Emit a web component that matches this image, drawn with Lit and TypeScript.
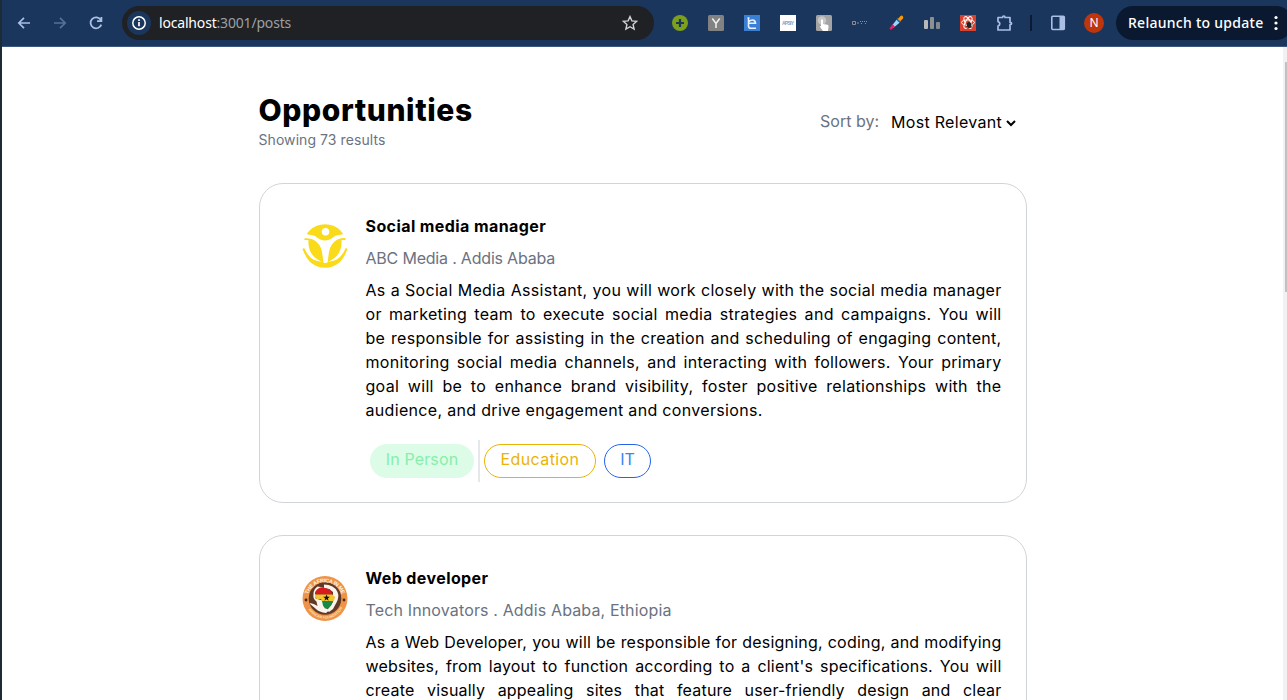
import { LitElement, html, css, svg } from "lit";
import { customElement, property } from "lit/decorators.js";

interface Post {
  title: string;
  meta: string;
  metaClass: string;
  logo: "figure" | "africa";
  lines: string[];
  tight?: boolean;
  last?: string;
}

const posts: Post[] = [
  {
    title: "Social media manager",
    meta: "ABC Media . Addis Ababa",
    metaClass: "narrow",
    logo: "figure",
    lines: [
      "As a Social Media Assistant, you will work closely with the social media manager",
      "or marketing team to execute social media strategies and campaigns. You will",
      "be responsible for assisting in the creation and scheduling of engaging content,",
      "monitoring social media channels, and interacting with followers. Your primary",
      "goal will be to enhance brand visibility, foster positive relationships with the",
    ],
    last: "audience, and drive engagement and conversions.",
  },
  {
    title: "Web developer",
    meta: "Tech Innovators . Addis Ababa, Ethiopia",
    metaClass: "wide",
    logo: "africa",
    tight: true,
    lines: [
      "As a Web Developer, you will be responsible for designing, coding, and modifying",
      "websites, from layout to function according to a client's specifications. You will",
      "create visually appealing sites that feature user-friendly design and clear",
    ],
  },
];

@customElement("browser-bar")
class BrowserBar extends LitElement {
  static styles = css`
    :host { display: flex; align-items: center; box-sizing: border-box; height: 47px; background: #1a365d; border-bottom: 1px solid #3b557c; font-family: "Noto Sans", "Open Sans", sans-serif; font-size: 14px; overflow: hidden; }
    svg { display: block; flex: none; }
    .nav { display: flex; gap: 20px; padding-left: 14px; flex: none; }
    .url { display: flex; align-items: center; flex: none; box-sizing: border-box; width: 532px; height: 34px; margin-left: 18px; padding: 0 16px 2px 5px; border-radius: 17px; background: #202124; color: #9aa0a6; }
    .info { width: 24px; height: 24px; border-radius: 50%; background: #1a365d; margin: 2px 8px 0 0; }
    .star { margin-top: 2px; }
    .host { color: #fff; }
    .addr { flex: 1; white-space: nowrap; letter-spacing: -0.18px; }
    .ext { display: flex; align-items: center; gap: 20px; margin-left: 18px; flex: none; }
    .sep { width: 2px; height: 16px; background: #0b1b36; margin: 0 18px 0 16px; flex: none; }
    .avatar { width: 20px; height: 20px; border-radius: 50%; background: #bf360c; color: #fff; font-size: 12px; line-height: 20px; text-align: center; margin: 0 12px 0 18px; flex: none; }
    .update { display: flex; align-items: center; flex: none; box-sizing: border-box; width: 177px; height: 34px; border-radius: 17px; padding-left: 12px; background: #0a1930; color: #fff; font-weight: 500; white-space: nowrap; }
    .update span { width: 140px; letter-spacing: 0.27px; padding-bottom: 2px; }
    .tiny { font: 700 5px "Liberation Sans", sans-serif; }
  `;
  render() {
    return html`
      <div class="nav">
        <svg width="16" height="16" viewBox="0 0 16 16" fill="none" stroke="#a9bfe3" stroke-width="1.7"><path d="M14 8H3M8 2.8 2.8 8 8 13.2"/></svg>
        <svg width="16" height="16" viewBox="0 0 16 16" fill="none" stroke="#56709a" stroke-width="1.7"><path d="M2 8h11M8 2.8 13.2 8 8 13.2"/></svg>
        <svg width="16" height="16" viewBox="0 0 16 16" fill="none" stroke="#a9bfe3" stroke-width="1.8"><path d="M12.8 5A5.5 5.5 0 1 0 13.3 9.6M13.4 2v4.2H9"/></svg>
      </div>
      <div class="url">
        <svg class="info" viewBox="0 0 24 24"><circle cx="12" cy="12" r="6.2" fill="none" stroke="#fff" stroke-width="1.5"/><path d="M12 11v4.3M12 8.3v1.6" stroke="#fff" stroke-width="1.7"/></svg>
        <div class="addr"><span class="host">localhost</span>:3001/posts</div>
        <svg class="star" width="16" height="16" viewBox="0 0 16 16" fill="none" stroke="#d0d2d6" stroke-width="1.4"><path d="m8 1.6 1.9 4.3 4.7.5-3.5 3.1 1 4.6L8 11.7l-4.1 2.4 1-4.6L1.4 6.4l4.7-.5z"/></svg>
      </div>
      <div class="ext">
        <svg width="16" height="16"><circle cx="8" cy="8" r="8" fill="#7c9f1c"/><path d="M8 4v8M4 8h8" stroke="#1a365d" stroke-width="2.2"/></svg>
        <svg width="16" height="16"><rect width="16" height="16" rx="1.5" fill="#828282"/><path d="m4.3 3.500 3.700 5 3.700-5M8 8v5" fill="none" stroke="#f2f2f2" stroke-width="1.500"/></svg>
        <svg width="16" height="16"><rect width="16" height="16" fill="#3b7fd4"/><path d="M4.500 2.500v8.500q0 2.300 2.300 2.300H12M5 8.300h6.500Q11.300 5 8.500 5 6.300 5 5.200 6.500M3.500 3h2" fill="none" stroke="#e8f2ff" stroke-width="1.600"/></svg>
        <svg width="16" height="16"><rect width="16" height="16" fill="#fff"/><text class="tiny" x="2" y="9.7" fill="#7ca3c4" textLength="12">APSIY</text></svg>
        <svg width="16" height="16"><rect width="16" height="16" rx="1.5" fill="#a4a4a4"/><circle cx="6" cy="5.500" r="4.200" fill="#c6c6c6"/><path d="M5 5q1-1.300 2 0v4l4.500.8q1.500.4 1 2L12 16H7l-3.300-4.500 1.300-.6z" fill="#fff"/></svg>
        <svg width="16" height="16" fill="none" stroke="#8c8f91"><path d="M.5 6.500h3v3h-3zM5 8h2"/><path d="M8 6.500h3M12 6.500h4M9 8.500h2M13 8.500h2" stroke-dasharray="1 1"/></svg>
        <svg width="16" height="16"><path d="M9 3.500 12.500 7" stroke="#2765a8" stroke-width="2"/><path d="m8.500 4.700 3 3-6 5-2-1.500z" fill="#9bd6f6"/><path d="m9.800 4 2.500-2.800q1.500-1.200 2.500 0t0 2.600L12.200 6.300z" fill="#ff9800"/><path d="m4.700 9.300 2.200 2.200-3.400 3H1.800v-1.700z" fill="#e91e63"/></svg>
        <svg width="16" height="16"><rect y="5" width="4" height="9" rx="1" fill="#b7b8ba"/><rect x="6" y="2" width="4" height="12" rx="1" fill="#8c9093"/><rect x="12" y="7" width="4" height="7" rx="1" fill="#83888c"/></svg>
        <svg width="16" height="16"><rect width="16" height="16" fill="#d9412f"/><g fill="none" stroke="#fff"><ellipse cx="8" cy="7.500" rx="6.500" ry="2.600"/><ellipse cx="8" cy="7.500" rx="6.500" ry="2.600" transform="rotate(60 8 7.500)"/><ellipse cx="8" cy="7.500" rx="6.500" ry="2.600" transform="rotate(120 8 7.500)"/></g><ellipse cx="9" cy="10" rx="2.200" ry="3" fill="#222"/><path d="M5.500 9h7M6 12h6.500" stroke="#222" stroke-width=".8"/></svg>
        <svg width="18" height="18" viewBox="0 0 18 18"><path d="M2 3.500h4.600q0-1.500 1.200-1.500T9 3.500h5v4.800q1.600 0 1.600 1.200t-1.600 1.200V16H2v-4q1.800-.5 1.800-2.200T2 7.600z" fill="none" stroke="#a9bfe3" stroke-width="1.700" stroke-linejoin="round"/></svg>
      </div>
      <div class="sep"></div>
      <svg width="16" height="16"><rect x="1.800" y="1.300" width="12.500" height="13.200" rx="1" fill="none" stroke="#a9bfe3" stroke-width="1.600"/><path d="M9.500 1.500h5v13h-5z" fill="#a9bfe3"/></svg>
      <div class="avatar">N</div>
      <div class="update"><span>Relaunch to update</span><svg width="16" height="16" fill="#fff"><circle cx="8" cy="2.500" r="1.600"/><circle cx="8" cy="8" r="1.600"/><circle cx="8" cy="13.500" r="1.600"/></svg></div>
    `;
  }
}

const figure = svg`<circle cx="23" cy="23" r="21.800" fill="#fadb19"/>
  <path d="M0 10.500q9 1 13 2.500 5.500 4.500 10 4.500t10-4.500q4-1.500 13-2.500v4.300q-8 .2-11 2-6.500 4-8 12L25.500 40h-4L20 28.800q-1.500-8-8.500-12Q8 15 0 15z" fill="#fff"/>
  <circle cx="23.500" cy="8.800" r="3.800" fill="#fff"/>
  <path d="M0 17h6.500Q5.500 33 20 38.700 6 38 0 25zM46 17h-6.500Q40.500 33 26 38.700 40 38 46 25z" fill="#fff"/>
  <path d="M9 18Q6.500 19 7.500 24M37 18q2.500 1 1.500 6" fill="none" stroke="#fadb19"/>
  <path d="M1.300 25.500q6 14.500 20.500 15.300M44.700 25.500q-6 14.500-20.500 15.300" fill="none" stroke="#fadb19" stroke-width="2"/>`;

const africa = svg`<defs><path id="top" d="M5.300 25a17.700 17.700 0 1 1 35.400 0"/><path id="bot" d="M3.500 26a19.600 19.600 0 0 0 39 0"/></defs>
  <circle cx="23" cy="23.500" r="22.500" fill="#ee9448"/><circle cx="23" cy="23.500" r="16.300" fill="#613a27"/>
  <text font-family="Liberation Sans" font-weight="700" font-size="5.500" fill="#fff3df"><textPath href="#top" startOffset="10%" textLength="44">THE AFRICA IN ME</textPath></text>
  <text font-family="Liberation Sans" font-weight="700" font-size="3.500" fill="#ffe2b8"><textPath href="#bot" startOffset="16%" textLength="41">AFRICAN FOUNDATION</textPath></text>
  <circle cx="4" cy="25" r="1.400" fill="#4a2715"/><circle cx="42" cy="25" r="1.400" fill="#4a2715"/>
  <path d="M22 9.500q10 0 13.500 7.500 2 5-1 10.500L31 34l-4 3-2-2 6-8V17l-4-3-5-1z" fill="#faf4ec"/>
  <path d="M11.500 19q0-5 4-7.500l6 1-8 6v5l7 2 1.500 6 5 4-3 2.500q-7-1-10-4L7.500 28.500q2-1 8 2.500l-1-4.500q-4-3-3-7.500z" fill="#faf4ec"/>
  <path d="M15 14.500q4-3.500 8-1.500l5 1.500 2.500 5H13q0-3.500 2-5z" fill="#d71920"/><path d="M13 19.500h17.200l3 2.500-1.700 4.500H20l-1-2.500h-4q-2.500-1.500-2-4.500z" fill="#f3c52b"/><path d="M20 26h11l-1.500 4-3 3.500H23l-2-3z" fill="#178b45"/>
  <path d="m24.500 19.500 1 2.300h2.400l-2 1.600.8 2.400-2.200-1.500-2.100 1.500.8-2.400-2-1.600h2.400z" fill="#16130f"/>`;

@customElement("post-card")
class PostCard extends LitElement {
  @property({ attribute: false }) post!: Post;
  static styles = css`
    :host { display: flex; box-sizing: border-box; width: 768px; height: 320px; border: 1px solid #d1d5db; border-radius: 24px; padding: 30px 24px 0 42px; flex: none; }
    .logo { flex: none; width: 46px; height: 46px; margin: 9px 17.5px 0 0; }
    .body { width: 636px; flex: none; line-height: 24px; }
    .title { font-weight: 700; letter-spacing: 0.41px; }
    .meta { margin: 8px 0; color: #6b7280; }
    .narrow { letter-spacing: -0.2px; }
    .wide { letter-spacing: 0.14px; }
    .title, .meta, .line, .last { white-space: nowrap; }
    .line { text-align: justify; text-align-last: justify; letter-spacing: 0.3px; }
    .tight { letter-spacing: 0.2px; }
    .last { letter-spacing: 0.32px; }
    .tags { display: flex; align-items: center; margin: 18px 0 0 4.5px; }
    .tag { box-sizing: border-box; height: 34px; line-height: 29px; border: 1px solid; border-radius: 17px; text-align: center; }
    .green { width: 104px; background: #dcfce7; border-color: #dcfce7; color: #86efac; letter-spacing: 0.15px; }
    .rule { width: 2px; height: 42px; background: #e5e7eb; margin: 0 4px; }
    .amber { width: 112px; color: #eab308; margin-right: 8px; letter-spacing: 0.4px; }
    .blue { width: 47px; border-color: #2563eb; color: #3b82f6; }
  `;
  render() {
    const p = this.post;
    return html`
      <svg class="logo" viewBox="0 0 46 46">${p.logo === "figure" ? figure : africa}</svg>
      <div class="body">
        <div class="title">${p.title}</div>
        <div class="meta ${p.metaClass}">${p.meta}</div>
        ${p.lines.map((l) => html`<div class="line ${p.tight ? "tight" : ""}">${l}</div>`)}
        ${p.last
          ? html`<div class="last">${p.last}</div>
        <div class="tags">
          <div class="tag green">In Person</div><div class="rule"></div>
          <div class="tag amber">Education</div><div class="tag blue">IT</div>
        </div>`
          : ""}
      </div>`;
  }
}

@customElement("app-root")
class AppRoot extends LitElement {
  static styles = css`
    :host { display: flex; box-sizing: border-box; flex-direction: column; width: 1287px; height: 700px; overflow: hidden; padding-left: 2px; background: #1c2b38; font: 16px Inter, sans-serif; color: #000; }
    .page { display: flex; flex: 1; min-height: 0; background: #fff; }
    .main { flex: 1; display: flex; flex-direction: column; padding-left: 257px; overflow: hidden; }
    .head { display: flex; justify-content: space-between; width: 758px; height: 136px; flex: none; white-space: nowrap; }
    h1 { font-size: 30px; line-height: 36px; font-weight: 800; margin: 45px 0 0 -0.5px; letter-spacing: 0.6px; }
    .sub { font-size: 14px; line-height: 20px; margin: 2px 0 0 -0.5px; color: #6b7280; letter-spacing: 0.07px; }
    .sort { display: flex; margin-top: 63px; line-height: 24px; }
    .label { line-height: 22px; color: #6b7280; }
    .pick { margin: 0 3px 0 12px; letter-spacing: 0.3px; }
    .cards { display: flex; flex-direction: column; gap: 32px; }
    .scroll { width: 4px; box-sizing: border-box; background: #f1f1f1; padding: 15px 0 0 2px; flex: none; }
    .thumb { height: 230px; background: #c1c1c1; }
  `;
  render() {
    return html`
      <browser-bar></browser-bar>
      <div class="page">
        <div class="main">
          <div class="head">
            <div><h1>Opportunities</h1><div class="sub">Showing 73 results</div></div>
            <div class="sort"><span class="label">Sort by:</span><span class="pick">Most Relevant</span><svg width="12" height="24"><path d="m2 11 4 4 4-4" fill="none" stroke="#000" stroke-width="2"/></svg></div>
          </div>
          <div class="cards">${posts.map((p) => html`<post-card .post=${p}></post-card>`)}</div>
        </div>
        <div class="scroll"><div class="thumb"></div></div>
      </div>`;
  }
}
